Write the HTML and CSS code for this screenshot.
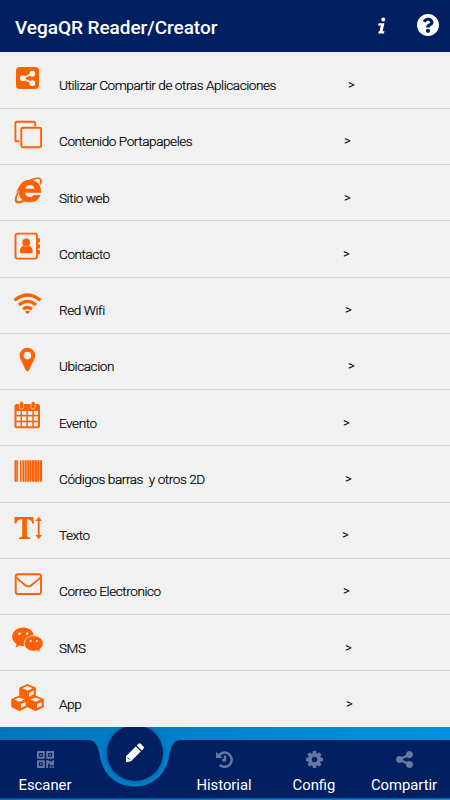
FILE: index.html
```
<!DOCTYPE html>
<html lang="es">
<head>
    <meta charset="UTF-8">
    <meta name="viewport" content="width=device-width, initial-scale=1.0">
    <title>VegaQR Reader/Creator</title>
    <link rel="stylesheet" href="styles.css">
</head>
<body>
    <header class="header">
        <h1>VegaQR Reader/Creator</h1>
        <svg class="info-icon" viewBox="0 0 10 18">
            <circle cx="6.3" cy="2.4" r="2"/>
            <path d="M1.6 6.2h5.8L5.6 14.2h1.9l-.6 2.3H1.2l.5-2.3H2.6l1.2-5.6H1.1z"/>
        </svg>
        <svg class="help-icon" viewBox="8 8 496 496">
            <path d="M504 256c0 136.997-111.043 248-248 248S8 392.997 8 256C8 119.083 119.043 8 256 8s248 111.083 248 248zM262.655 90c-54.497 0-89.255 22.957-116.549 63.758-3.536 5.286-2.353 12.415 2.715 16.258l34.699 26.31c5.205 3.947 12.621 3.008 16.665-2.122 17.864-22.658 30.113-35.797 57.303-35.797 20.429 0 45.698 13.148 45.698 32.958 0 14.976-12.363 22.667-32.534 33.976C247.128 238.528 216 254.941 216 296v4c0 6.627 5.373 12 12 12h56c6.627 0 12-5.373 12-12v-1.333c0-28.462 83.186-29.647 83.186-106.667 0-58.002-60.165-102-116.531-102zM256 338c-25.365 0-46 20.635-46 46 0 25.364 20.635 46 46 46s46-20.636 46-46c0-25.364-20.635-46-46-46z"/>
        </svg>
    </header>

    <ul class="menu">
        <li>
            <svg class="icon" viewBox="0 0 48 56">
                <rect x="16" y="15" width="23" height="22" rx="4"/>
                <path class="light-line" d="M33 21.5L22.5 26.2L33 31.5"/>
                <g class="light"><circle cx="32.3" cy="21.7" r="2.9"/><circle cx="22.8" cy="26.2" r="2.9"/><circle cx="32.3" cy="31.2" r="2.9"/></g>
            </svg>
            <span class="label">Utilizar Compartir de otras Aplicaciones</span><span class="arrow">&gt;</span>
        </li>
        <li>
            <svg class="icon" viewBox="0 0 48 56">
                <path class="line" d="M19.5 33.3H17a1.6 1.6 0 0 1-1.6-1.6V15.400a1.600 1.600 0 0 1 1.600-1.600h16.600a1.600 1.600 0 0 1 1.600 1.600v3"/>
                <rect class="line" x="21.3" y="19.8" width="19.8" height="19.5" rx="1.5"/>
            </svg>
            <span class="label">Contenido Portapapeles</span><span class="arrow">&gt;</span>
        </li>
        <li>
            <svg class="icon" viewBox="0 0 48 56">
                <path d="M41 28.800H25.200c.2 2.500 2 4.200 4.300 4.200 1.900 0 3.200-.8 4-2.100h7c-1.400 4.400-5.400 7.400-10.700 7.400-6.600 0-11.400-4.600-11.400-11.100 0-6.600 5-11.400 11.400-11.400 6.700 0 11.200 5 11.200 11.300zM25.300 24.800h9.200c-.2-2.300-2-3.900-4.500-3.900s-4.300 1.500-4.700 3.900z" fill-rule="evenodd"/>
                <path d="M16.200 28.800c2-7 7.500-11 12.800-12.800 4.800-2.700 10.300-3.500 12-1.400 1.100 1.500.9 4-.4 6.500l-1.200-1.500c.8-1.900.9-3.300.2-4-1.300-1.200-4.500-.4-8.400 1.700-5 1.800-9.700 5.500-15 11.500z"/>
                <path d="M18 27.200c-3.200 5-4.200 9.700-2.200 11.500 2.100 1.700 6.700.5 11.200-2.600l-2.500-1.200c-3.200 2-5.900 2.800-7.100 1.800-1.200-1.200-.7-4.200 1.300-7.800z"/>
            </svg>
            <span class="label">Sitio web</span><span class="arrow">&gt;</span>
        </li>
        <li>
            <svg class="icon" viewBox="0 0 48 56">
                <rect class="line" x="15.500" y="13.600" width="21.500" height="25" rx="2"/>
                <circle cx="26.200" cy="22.400" r="3.900"/>
                <path d="M19.800 31.500c0-3.500 1.400-5.600 3.800-5.800q2.600 1.700 5.200 0c2.500.2 3.900 2.300 3.900 5.800 0 1.100-.7 1.700-1.900 1.700h-9.100c-1.200 0-1.900-.6-1.900-1.700z"/>
                <path d="M37 18.200h2q1 0 1 1v2.200q0 1-1 1h-2zM37 24.200h2q1 0 1 1v2.200q0 1-1 1h-2zM37 30h2q1 0 1 1v2.200q0 1-1 1h-2z"/>
            </svg>
            <span class="label">Contacto</span><span class="arrow">&gt;</span>
        </li>
        <li>
            <svg class="icon" viewBox="0 0 48 56">
                <path class="wave" d="M14.500 23.300Q27.500 12.700 40.500 23.300M18.900 28Q27.500 20.700 36.100 28M23.100 32.200Q27.500 28.800 31.900 32.200"/>
                <path d="M24.900 34.600q2.600-1.900 5.200 0l-2.600 2.700z"/>
            </svg>
            <span class="label">Red Wifi</span><span class="arrow">&gt;</span>
        </li>
        <li>
            <svg class="icon" viewBox="0 0 48 56">
                <path fill-rule="evenodd" d="M27.400 14.800a7.800 7.800 0 0 1 7.800 7.800c0 1.200-.2 2.100-.6 3L29 37.200q-1.600 2-3.200 0L20.200 25.600c-.4-.9-.6-1.800-.6-3a7.800 7.800 0 0 1 7.800-7.800zm0 4a3.800 3.800 0 1 0 0 7.600 3.800 3.800 0 0 0 0-7.600z"/>
            </svg>
            <span class="label">Ubicacion</span><span class="arrow">&gt;</span>
        </li>
        <li>
            <svg class="icon" viewBox="0 0 48 56">
                <rect x="14.500" y="15" width="25.500" height="24.300" rx="2"/>
                <g class="light">
                    <rect x="16.500" y="22" width="4" height="3.800"/><rect x="22" y="22" width="4.400" height="3.800"/><rect x="27.900" y="22" width="4.400" height="3.800"/><rect x="33.800" y="22" width="4.200" height="3.800"/>
                    <rect x="16.500" y="27.400" width="4" height="4.300"/><rect x="22" y="27.400" width="4.400" height="4.300"/><rect x="27.900" y="27.400" width="4.400" height="4.300"/><rect x="33.800" y="27.400" width="4.200" height="4.300"/>
                    <rect x="16.500" y="33.300" width="4" height="4"/><rect x="22" y="33.300" width="4.400" height="4"/><rect x="27.900" y="33.300" width="4.400" height="4"/><rect x="33.800" y="33.300" width="4.200" height="4"/>
                </g>
                <g class="ring"><rect x="19.400" y="12.600" width="4.200" height="7.400" rx="1.800"/><rect x="31" y="12.600" width="4.200" height="7.400" rx="1.800"/></g>
            </svg>
            <span class="label">Evento</span><span class="arrow">&gt;</span>
        </li>
        <li>
            <svg class="icon" viewBox="0 0 48 56">
                <path d="M14.500 15.300h2.300v21.500h-2.300zM17.100 15.300h1v21.500h-1zM20 15.300h1v21.500h-1zM21.600 15.300h1v21.500h-1zM23 15.300h1.300v21.500H23zM24.800 15.300h1.900v21.500h-1.900zM27.200 15.300h2.300v21.500h-2.300zM29.900 15.300h1.600v21.500h-1.600zM31.900 15.300h2.100v21.500h-2.100zM34.300 15.300H37v21.500h-2.700zM37.300 15.300h1.800v21.500h-1.800zM39.600 15.300h2.500v21.500h-2.500z"/>
            </svg>
            <span class="label">Códigos barras&nbsp; y otros 2D</span><span class="arrow">&gt;</span>
        </li>
        <li>
            <svg class="icon" viewBox="0 0 48 56">
                <path d="M14.500 15h18.700l.8 6.500h-1.700c-.8-3-1.800-4.200-5.400-4.200v16.200c0 1.200.6 1.600 3.300 1.900v1.500H19v-1.500c2.600-.3 3.200-.7 3.200-1.900V17.300c-3.800 0-5 1.200-5.900 4.200h-1.700z"/>
                <path d="M38.700 14.700l3.200 4.200h-2.300v14.200h2.300l-3.200 4.200-3.200-4.200h2.300V18.900h-2.300z"/>
            </svg>
            <span class="label">Texto</span><span class="arrow">&gt;</span>
        </li>
        <li>
            <svg class="icon" viewBox="0 0 48 56">
                <rect class="line" x="15.700" y="16.300" width="25.300" height="19.700" rx="2"/>
                <path class="line" d="M16 19c2.500 3.200 6 5.500 9.500 8.200q2.900 2.100 5.800 0C34.800 24.500 38 22.200 40.700 19"/>
            </svg>
            <span class="label">Correo Electronico</span><span class="arrow">&gt;</span>
        </li>
        <li>
            <svg class="icon" viewBox="0 0 48 56">
                <path d="M23.200 13.600c6 0 10.700 3.900 10.700 9.100s-4.700 9.300-10.700 9.300c-1.400 0-2.500-.2-3.700-.6L15.600 33.500l1-3.400c-2.800-1.900-4.400-4.400-4.400-7.400 0-5.200 4.900-9.100 11-9.100z"/>
                <path class="bubble" d="M33.800 21.700c5 0 9.400 3.300 9.400 7.800 0 2.600-1.500 4.500-3.500 6l.8 2.900-3.300-1.700c-1.100.3-2.200.5-3.400.5-5.300 0-9.500-3.400-9.500-7.700s4.200-7.800 9.500-7.800z"/>
                <g class="light"><circle cx="19.500" cy="19.800" r="1.300"/><circle cx="27" cy="19.800" r="1.300"/><circle cx="30.700" cy="27" r="1.100"/><circle cx="36.800" cy="27" r="1.100"/></g>
            </svg>
            <span class="label">SMS</span><span class="arrow">&gt;</span>
        </li>
        <li>
            <svg class="icon" viewBox="0 0 48 56">
                <defs>
                    <g id="cube">
                        <path d="M0-7.300L7.500-4q.8.400.8 1.300v6.200q0 .9-.8 1.300L.8 8q-.8.400-1.600 0l-6.700-3.200q-.8-.4-.8-1.300v-6.200q0-.9.800-1.300z"/>
                        <path class="light" d="M0-5.300L5.200-3.100 0-.9l-5.200-2.200zM1.500 1.400l4.700-2.100v3.700L1.500 5.400z"/>
                    </g>
                </defs>
                <use href="#cube" x="27.500" y="21.300"/>
                <use href="#cube" x="19.500" y="32.700"/>
                <use href="#cube" x="35.500" y="32.700"/>
            </svg>
            <span class="label">App</span><span class="arrow">&gt;</span>
        </li>
    </ul>

    <nav class="tabbar">
        <svg class="tabbar-shape" viewBox="0 0 450 59">
            <path d="M0 0H88C96 0 98 7 99.500 14C102 33 115 46.500 134.500 46.500S167 33 169.500 14C171 7 173 0 181 0H450V58.500H0z"/>
        </svg>
        <a class="tab escaner">
            <svg viewBox="0 0 16 16">
                <path fill-rule="evenodd" d="M0 0h7.300v7.300H0zM1.800 1.800v3.700h3.700V1.800zM8.700 0H16v7.300H8.700zM10.500 1.800v3.700h3.700V1.800zM0 8.700h7.300V16H0zM1.800 10.500v3.700h3.700v-3.700zM8.700 8.700h2.200l1.400 1.200h2V8.700H16v4.600h-3.800v-1.400h-1.700V16H8.700zM12 14.300h1.500V16H12zM14.500 14.300H16V16h-1.500z"/>
                <path d="M2.900 2.900h1.500v1.500H2.900zM11.600 2.900h1.500v1.500h-1.500zM2.900 11.600h1.500v1.500H2.900z"/>
            </svg>
            <span>Escaner</span>
        </a>
        <a class="tab historial">
            <svg viewBox="0 0 16 16">
                <path class="history-line" d="M2.300 4.800A6.700 6.700 0 1 1 3.400 13M8.500 4.300v4.400H5.800"/>
                <path d="M0 .8L6.200 6.500H0z"/>
            </svg>
            <span>Historial</span>
        </a>
        <a class="tab config">
            <svg viewBox="0 128 1536 1536">
                <path d="M1024 896q0-106-75-181t-181-75-181 75-75 181 75 181 181 75 181-75 75-181zm512-109v222q0 12-8 23t-20 13l-185 28q-19 54-39 91 35 50 107 138 10 12 10 25t-9 23q-27 37-99 108t-94 71q-12 0-26-9l-138-108q-44 23-91 38-16 136-29 186-7 28-36 28h-222q-14 0-24.500-8.500t-11.500-21.500l-28-184q-49-16-90-37l-141 107q-10 9-25 9-14 0-25-11-126-114-165-168-7-10-7-23 0-12 8-23 15-21 51-66.500t54-70.500q-27-50-41-99l-183-27q-13-2-21-12.500t-8-23.500v-222q0-12 8-23t19-13l186-28q14-46 39-92-40-57-107-138-10-12-10-24 0-10 9-23 26-36 98.500-107.500t94.500-71.500q13 0 26 10l138 107q44-23 91-38 16-136 29-186 7-28 36-28h222q14 0 24.500 8.500t11.500 21.500l28 184q49 16 90 37l142-107q9-9 24-9 13 0 25 10 129 119 165 170 7 8 7 22 0 12-8 23-15 21-51 66.500t-54 70.500q26 50 41 98l183 28q13 2 21 12.500t8 23.500z"/>
            </svg>
            <span>Config</span>
        </a>
        <a class="tab compartir">
            <svg viewBox="0 128 1536 1536">
                <path d="M1216 1024q133 0 226.500 93.500t93.500 226.500-93.500 226.500-226.500 93.500-226.500-93.500-93.500-226.500q0-12 2-34l-360-180q-92 86-218 86-133 0-226.500-93.500t-93.500-226.500 93.500-226.500 226.500-93.500q126 0 218 86l360-180q-2-22-2-34 0-133 93.500-226.500t226.500-93.500 226.500 93.500 93.500 226.500-93.500 226.500-226.500 93.500q-126 0-218-86l-360 180q2 22 2 34t-2 34l360 180q92-86 218-86z"/>
            </svg>
            <span>Compartir</span>
        </a>
        <div class="fab-clip">
            <div class="fab">
                <svg viewBox="0 0 20 20">
                    <path d="M1 13.200L10.800 3.400l5 5L6 18.200l-5 1zM11.700 2.500l1.700-1.700q1.200-1.200 2.400 0l2.600 2.600q1.200 1.200 0 2.400l-1.700 1.700z"/>
                    <path class="pencil-tip" d="M2.600 14.400l2.300 2.300"/>
                </svg>
            </div>
        </div>
    </nav>
</body>
</html>
```
FILE: styles.css
```
* {
    box-sizing: border-box;
}

body {
    font-family: Roboto, sans-serif;
    margin: 0;
    height: 800px;
    overflow: hidden;
    display: flex;
    flex-direction: column;
    background-color: #f1f1f1;
    color: #000;
}

.header {
    display: flex;
    align-items: center;
    height: 52px;
    padding: 0 11px 0 15px;
    background-color: #022061;
    color: #fff;
}

.header svg {
    fill: #fff;
}

h1 {
    flex: 1;
    margin: 0;
    padding-top: 2px;
    font-size: 19px;
    font-weight: 500;
    letter-spacing: -0.04px;
}

.info-icon {
    width: 10px;
    height: 18px;
    margin-right: 30px;
}

.help-icon {
    width: 22px;
    height: 22px;
    margin-bottom: 2px;
}

.menu {
    list-style: none;
    height: 675px;
    margin: 0;
    padding: 0;
}

.menu li {
    display: flex;
    height: 56.25px;
    border-top: 1px solid #d6d6d6;
    font-size: 13.6px;
    line-height: 20px;
}

.menu li:first-child {
    height: 55.75px;
    border-top-color: transparent;
}

.icon {
    width: 48px;
    height: 56px;
    margin-top: -1px;
    margin-right: 11px;
    flex: none;
    fill: #ff6000;
}

.icon .light {
    fill: #f1f1f1;
}

.icon .line {
    fill: none;
    stroke: #ff6000;
    stroke-width: 1.9;
}

.icon .light-line {
    fill: none;
    stroke: #f1f1f1;
    stroke-width: 1.8;
}

.icon .wave {
    fill: none;
    stroke: #ff6000;
    stroke-width: 3.2;
}

.icon .ring {
    stroke: #f1f1f1;
    stroke-width: 0.7;
}

.icon .bubble {
    stroke: #f1f1f1;
    stroke-width: 0.8;
}

.label {
    width: 285px;
    padding-top: 22.5px;
    font-weight: 300;
    letter-spacing: -0.45px;
    white-space: nowrap;
    -webkit-text-stroke: 0.2px #000;
}

.menu li:first-child span {
    padding-top: 22px;
}

.arrow {
    padding-top: 22.5px;
    font-size: 13px;
}

/* arrows are not aligned in a column */
.menu li:nth-child(1) .arrow,
.menu li:nth-child(6) .arrow {
    margin-left: 4px;
}

.menu li:nth-child(4) .arrow,
.menu li:nth-child(7) .arrow,
.menu li:nth-child(10) .arrow {
    margin-left: -1px;
}

.menu li:nth-child(5) .arrow,
.menu li:nth-child(8) .arrow,
.menu li:nth-child(11) .arrow {
    margin-left: 1px;
}

.menu li:nth-child(9) .arrow {
    margin-left: -2px;
}

.menu li:nth-child(12) .arrow {
    margin-left: 2px;
}

.tabbar {
    position: relative;
    display: flex;
    height: 73px;
    padding-top: 24px;
    background: linear-gradient(to right, #0075bd, #0092df);
    color: #fff;
}

.tabbar-shape {
    position: absolute;
    left: 0;
    top: 13px;
    width: 450px;
    height: 59px;
    fill: #022061;
}

.tab {
    position: relative;
    width: 90px;
    display: flex;
    flex-direction: column;
    align-items: center;
    font-size: 14.8px;
    line-height: 18px;
}

.tab svg {
    width: 17px;
    height: 17px;
    margin-bottom: 8px;
    fill: #6577a2;
}

.tab .history-line {
    fill: none;
    stroke: #6577a2;
    stroke-width: 2.3;
}

.historial {
    margin-left: 89px;
}

/* keeps the round button from covering the list */
.fab-clip {
    position: absolute;
    left: 96px;
    top: 0;
    width: 77px;
    height: 60px;
    overflow: hidden;
}

.fab {
    width: 56px;
    height: 56px;
    margin: -2px auto 0;
    border-radius: 50%;
    display: flex;
    align-items: center;
    justify-content: center;
    background-color: #022061;
    box-shadow: 0 0 4px rgba(2, 32, 97, 0.5);
}

.fab svg {
    width: 20px;
    height: 20px;
    fill: #fff;
}

.fab .pencil-tip {
    stroke: #022061;
    stroke-width: 1;
}
```
